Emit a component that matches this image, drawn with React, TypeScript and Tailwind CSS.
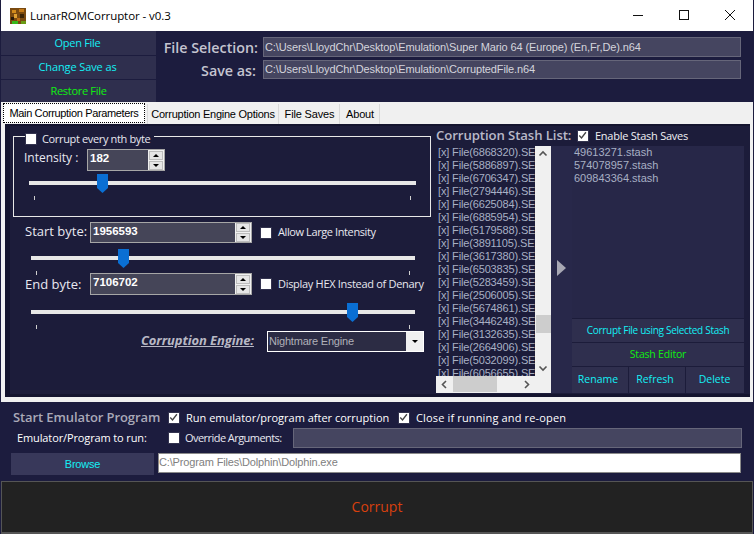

const FILES = ['6868320','5886897','6706347','2794446','6625084','6885954','5179588','3891105','3617380','6503835','5283459','2506005','5674861','3446248','3132635','2664906','5032099','6056655'];

function Check({ on = false, cls = '' }: { on?: boolean; cls?: string }) {
  return (
    <span className={`relative block h-[12px] w-[12px] shrink-0 bg-white border border-[#33334f] ${cls}`}>
      {on && (
        <svg viewBox="0 0 12 12" className="absolute left-0 top-0 h-[10px] w-[10px]">
          <path d="M1.5 5.5 L4.2 8.3 L9.5 1.5" fill="none" stroke="#444" strokeWidth="1.6" />
        </svg>
      )}
    </span>
  );
}

function Spin({ value, cls }: { value: string; cls: string }) {
  return (
    <div className={`flex border border-[#a6a6a6] bg-[#454558] ${cls}`}>
      <div className="flex-1 pl-[2px] text-[11.5px] leading-[16px] font-bold text-white font-['Liberation_Sans']">{value}</div>
      <div className="flex w-[16px] flex-col justify-center gap-[1px] bg-[#f0f0f0] px-[1px]">
        <div className="flex h-[9px] items-center justify-center border border-[#bdbdbd] bg-[#e6e6e6]">
          <div className="h-0 w-0 border-x-[3px] border-b-[3px] border-x-transparent border-b-black" />
        </div>
        <div className="flex h-[9px] items-center justify-center border border-[#bdbdbd] bg-[#e6e6e6]">
          <div className="h-0 w-0 border-x-[3px] border-t-[3px] border-x-transparent border-t-black" />
        </div>
      </div>
    </div>
  );
}

function Thumb({ left }: { left: string }) {
  return (
    <svg viewBox="0 0 11 19" className={`absolute top-[-7px] h-[19px] w-[11px] ${left}`}>
      <path d="M0 0H11V14L5.5 19L0 14Z" fill="#0a6fd4" />
    </svg>
  );
}

function Slider({ cls, thumb }: { cls: string; thumb: string }) {
  return (
    <div className={`relative h-[25px] ${cls}`}>
      <div className="h-[4px] bg-[#e7e7e7]" />
      <Thumb left={thumb} />
      <div className="mt-[11px] flex justify-between px-[5px]">
        <div className="h-[4px] w-[1px] bg-[#cfcfcf]" />
        <div className="h-[4px] w-[1px] bg-[#cfcfcf]" />
      </div>
    </div>
  );
}

function Btn({ label, cls }: { label: string; cls: string }) {
  return <div className={`flex items-center justify-center whitespace-nowrap bg-[#2f2f4e] ${cls}`}>{label}</div>;
}

export default function App() {
  return (
    <div className="flex h-[534px] w-[754px] flex-col overflow-hidden bg-[#1c1c3e] pl-[1px] pr-[1px] font-['Open_Sans',sans-serif] text-white">
      {/* Title bar */}
      <div className="flex h-[31px] shrink-0 items-center bg-white pl-[9px] text-black">
        <svg viewBox="0 0 16 16" className="h-[16px] w-[16px] shrink-0">
          <rect width="16" height="16" fill="#7a4a10" />
          <rect x="2" y="2" width="4" height="3" fill="#d08a1c" />
          <rect x="9" y="1" width="5" height="3" fill="#c47a18" />
          <rect x="4" y="6" width="3" height="4" fill="#e0a030" />
          <rect x="10" y="6" width="4" height="4" fill="#3a2408" />
          <rect x="1" y="9" width="3" height="3" fill="#2a1a08" />
          <rect x="7" y="10" width="3" height="3" fill="#b86c14" />
          <rect x="2" y="13" width="6" height="3" fill="#38b81c" />
          <rect x="11" y="13" width="5" height="3" fill="#6a9a14" />
        </svg>
        <span className="ml-[4px] text-[11.5px] tracking-[-0.08px] font-['Open_Sans']">LunarROMCorruptor - v0.3</span>
        <div className="ml-auto flex items-center">
          <svg viewBox="0 0 46 31" className="h-[31px] w-[46px]"><path d="M18 15.5H28" stroke="#111" strokeWidth="1" /></svg>
          <svg viewBox="0 0 46 31" className="h-[31px] w-[46px]"><rect x="18.5" y="10.5" width="9" height="9" fill="none" stroke="#111" /></svg>
          <svg viewBox="0 0 46 31" className="h-[31px] w-[46px]"><path d="M18 10L28 20M28 10L18 20" stroke="#111" strokeWidth="1" /></svg>
        </div>
      </div>

      {/* File header */}
      <div className="flex h-[71px] shrink-0">
        <div className="flex w-[155px] flex-col gap-[1px] text-[11px]">
          <Btn label="Open File" cls="h-[24px] pt-[1px] pr-[2px] tracking-[-0.3px] text-[#14f0f5]" />
          <Btn label="Change Save as" cls="h-[23px] pr-[2px] tracking-[-0.1px] text-[#14f0f5]" />
          <Btn label="Restore File" cls="h-[22px] tracking-[-0.3px] text-[#10f010]" />
        </div>
        <div className="flex flex-1 flex-col gap-[3px] pt-[6px]">
          <div className="flex h-[20px] items-center">
            <span className="w-[102px] whitespace-nowrap pt-[2px] text-right text-[14.3px] font-semibold text-[#c4c4d0]">File Selection:</span>
            <div className="ml-[5px] flex h-[20px] w-[478px] items-center whitespace-nowrap border border-[#66667a] bg-[#454560] pl-[1px] text-[11px] tracking-[-0.12px] text-[#d4d4dc] font-['Liberation_Sans']">C:\Users\LloydChr\Desktop\Emulation\Super Mario 64 (Europe) (En,Fr,De).n64</div>
          </div>
          <div className="flex h-[19px] items-center">
            <span className="w-[100px] pt-[2px] text-right text-[14.3px] font-semibold text-[#c4c4d0]">Save as:</span>
            <div className="ml-[7px] flex h-[19px] w-[478px] items-center whitespace-nowrap border border-[#66667a] bg-[#454560] pl-[1px] text-[11px] tracking-[-0.12px] text-[#d4d4dc] font-['Liberation_Sans']">C:\Users\LloydChr\Desktop\Emulation\CorruptedFile.n64</div>
          </div>
        </div>
      </div>

      {/* Tabs */}
      <div className="flex h-[22px] shrink-0 items-start whitespace-nowrap bg-[#f0f0f0] pl-[2px] pt-[1px] text-[11px] leading-[18px] text-black font-['Liberation_Sans']">
        <div className="h-[20px] w-[142px] border border-dotted border-black bg-white text-center tracking-[-0.35px]">Main Corruption Parameters</div>
        <div className="mt-[1px] ml-[2px] h-[21px] w-[132px] border-x border-[#d9d9d9] text-center leading-[21px] tracking-[-0.25px]">Corruption Engine Options</div>
        <div className="mt-[1px] h-[21px] w-[61px] border-r border-[#d9d9d9] pl-[1px] text-center leading-[21px] tracking-[-0.15px]">File Saves</div>
        <div className="mt-[1px] h-[21px] w-[40px] border-r border-[#d9d9d9] pl-[1px] text-center leading-[21px] tracking-[-0.15px]">About</div>
      </div>

      {/* Panel */}
      <div className="h-[278px] shrink-0 border-x-[2px] border-b-[5px] border-[#f0f0f0] bg-[#f0f0f0] pl-[2px] pr-[1px]">
        <div className="flex h-full border-t border-[#14142e] bg-[#14142e] p-[1px_0_4px_5px]">
          <div className="flex h-[268px] flex-1 bg-[#1c1c3a] pr-[1px]">
            {/* Parameters */}
            <div className="w-[426px] shrink-0 pl-[3px] pt-[10px]">
              <div className="relative h-[81px] w-[418px] border border-[#e8e8e8]">
                <div className="absolute left-[11px] top-[-5px] flex items-center gap-[5px] bg-[#1c1c3a] pr-[4px]">
                  <Check />
                  <span className="whitespace-nowrap text-[11px] leading-[14px] tracking-[-0.35px] text-[#e8e8f0]">Corrupt every nth byte</span>
                </div>
                <div className="flex items-center pl-[10px] pt-[12px]">
                  <span className="w-[63px] pb-[5px] text-[12px] leading-[17px] text-[#e8e8f0]">Intensity :</span>
                  <Spin value="182" cls="h-[22px] w-[78px]" />
                </div>
                <Slider cls="ml-[15px] mr-[14px] mt-[10px]" thumb="left-[68px]" />
              </div>
              <div className="mt-[5px] flex h-[21px] items-center pl-[12px]">
                <span className="w-[65px] pb-[1px] text-[13px] text-[#e8e8f0]">Start byte:</span>
                <Spin value="1956593" cls="h-[21px] w-[162px]" />
                <Check cls="ml-[8px]" />
                <span className="ml-[6px] whitespace-nowrap text-[11px] tracking-[-0.4px] text-[#e8e8f0]">Allow Large Intensity</span>
              </div>
              <Slider cls="ml-[18px] mt-[13px] w-[384px]" thumb="left-[87px]" />
              <div className="mt-[-8px] flex h-[22px] items-center pl-[12px]">
                <span className="w-[65px] pt-[2px] text-[13px] text-[#e8e8f0]">End byte:</span>
                <Spin value="7106702" cls="h-[22px] w-[162px]" />
                <Check cls="ml-[8px]" />
                <span className="ml-[6px] whitespace-nowrap pt-[1px] text-[11px] tracking-[-0.3px] text-[#e8e8f0]">Display HEX Instead of Denary</span>
              </div>
              <Slider cls="ml-[18px] mt-[15px] w-[384px]" thumb="left-[316px]" />
              <div className="mt-[-5px] flex h-[22px] items-center">
                <span className="ml-[128px] w-[116px] whitespace-nowrap text-[13px] font-bold italic tracking-[-0.1px] text-[#b8b8c4] underline">Corruption Engine:</span>
                <div className="ml-[10px] flex h-[21px] w-[157px] border border-white bg-[#2c2c44]">
                  <span className="flex-1 pl-[1px] text-[11px] leading-[19px] tracking-[-0.2px] text-[#b0b0b8] font-['Liberation_Sans']">Nightmare Engine</span>
                  <div className="flex w-[17px] items-center justify-center bg-[#f0f0f0]">
                    <div className="h-0 w-0 border-x-[3px] border-t-[3px] border-x-transparent border-t-black" />
                  </div>
                </div>
              </div>
            </div>

            {/* Stash */}
            <div className="flex flex-1 flex-col">
              <div className="flex h-[20px] items-center">
                <span className="w-[135px] whitespace-nowrap text-[13.2px] font-semibold tracking-[-0.1px] text-[#b8b8c8]">Corruption Stash List:</span>
                <Check on cls="ml-[6px]" />
                <span className="ml-[6px] whitespace-nowrap text-[11px] tracking-[-0.25px] text-[#f0f0f4]">Enable Stash Saves</span>
              </div>
              <div className="flex h-[247px]">
                <div className="flex h-full w-[115px] shrink-0 flex-col">
                  <div className="flex h-[230px]">
                    <div className="w-[99px] overflow-hidden pl-[2px] text-[11px] leading-[13px] tracking-[-0.15px] whitespace-nowrap text-[#a8b0c4] font-['Liberation_Sans']">
                      {FILES.map((f) => (
                        <div key={f}>[x] File({f}).SET</div>
                      ))}
                    </div>
                    <div className="relative w-[16px] bg-[#f0f0f0]">
                      <svg viewBox="0 0 16 16" className="absolute left-0 top-0 h-[16px] w-[16px]"><path d="M4.5 9.5L8 6L11.5 9.5" fill="none" stroke="#555" strokeWidth="1.6" /></svg>
                      <div className="absolute left-[1px] top-[169px] h-[18px] w-[15px] bg-[#cdcdcd]" />
                      <svg viewBox="0 0 16 16" className="absolute bottom-0 left-0 h-[16px] w-[16px]"><path d="M4.5 6.5L8 10L11.5 6.5" fill="none" stroke="#555" strokeWidth="1.6" /></svg>
                    </div>
                  </div>
                  <div className="relative h-[17px] bg-[#f0f0f0]">
                    <svg viewBox="0 0 17 17" className="absolute left-0 top-0 h-[17px] w-[17px]"><path d="M10 5L6.5 8.5L10 12" fill="none" stroke="#555" strokeWidth="1.6" /></svg>
                    <div className="absolute left-[17px] top-0 h-[16px] w-[44px] bg-[#cdcdcd]" />
                    <svg viewBox="0 0 17 17" className="absolute left-[82px] top-0 h-[17px] w-[17px]"><path d="M7 5L10.5 8.5L7 12" fill="none" stroke="#555" strokeWidth="1.6" /></svg>
                  </div>
                </div>
                <div className="flex w-[21px] shrink-0 items-center justify-center bg-[#28284a] pb-[4px]">
                  <svg viewBox="0 0 9 16" className="h-[16px] w-[9px]"><path d="M0 0L9 8L0 16Z" fill="#a8a8b4" /></svg>
                </div>
                <div className="flex w-[172px] shrink-0 flex-col gap-[1px]">
                  <div className="h-[172px] bg-[#272748] pl-[2px] text-[11px] leading-[13px] text-[#a8b0c4] font-['Liberation_Sans']">
                    <div>49613271.stash</div>
                    <div>574078957.stash</div>
                    <div>609843364.stash</div>
                  </div>
                  <Btn label="Corrupt File using Selected Stash" cls="h-[23px] text-[10px] tracking-[-0.3px] text-[#14f0f5]" />
                  <Btn label="Stash Editor" cls="h-[23px] text-[10.5px] tracking-[-0.2px] text-[#10f010]" />
                  <div className="flex h-[26px] gap-[1px] text-[10.5px]">
                    <Btn label="Rename" cls="w-[56px] pr-[4px] text-[#14f0f5]" />
                    <Btn label="Refresh" cls="w-[56px] pr-[4px] text-[#14f0f5]" />
                    <Btn label="Delete" cls="w-[58px] pr-[1px] text-[#14f0f5]" />
                  </div>
                </div>
              </div>
            </div>
          </div>
        </div>
      </div>

      {/* Emulator */}
      <div className="flex h-[79px] shrink-0 flex-col pt-[8px]">
        <div className="flex h-[16px] items-center">
          <span className="ml-[12px] w-[155px] whitespace-nowrap text-[13px] font-semibold tracking-[-0.1px] text-[#a9a9b8]">Start Emulator Program</span>
          <Check on />
          <span className="ml-[6px] w-[212px] whitespace-nowrap text-[11px]">Run emulator/program after corruption</span>
          <Check on />
          <span className="ml-[6px] whitespace-nowrap text-[11px] tracking-[0.15px]">Close if running and re-open</span>
        </div>
        <div className="mt-[2px] flex h-[20px] items-center">
          <span className="ml-[16px] w-[151px] whitespace-nowrap text-[11px] tracking-[-0.12px]">Emulator/Program to run:</span>
          <Check />
          <span className="ml-[5px] w-[108px] whitespace-nowrap text-[11px] tracking-[-0.55px] text-[#e8e8f0]">Override Arguments:</span>
          <div className="h-[20px] w-[449px] border border-[#66667a] bg-[#454560]" />
        </div>
        <div className="mt-[5px] flex h-[22px] items-start">
          <div className="ml-[10px] flex h-[22px] w-[143px] items-center justify-center bg-[#38385a] text-[11px] tracking-[-0.2px] text-[#14f0f5] font-['Liberation_Sans']">Browse</div>
          <div className="ml-[4px] h-[20px] w-[583px] border border-[#8a8a8a] bg-white text-[11px] leading-[17px] tracking-[-0.15px] text-[#808080] font-['Liberation_Sans']">C:\Program Files\Dolphin\Dolphin.exe</div>
        </div>
      </div>

      {/* Corrupt */}
      <div className="flex h-[52px] shrink-0 items-center justify-center border border-[#555] bg-[#222222] pb-[1px] text-[14px] text-[#d8400e]">Corrupt</div>
      <div className="flex-1 bg-[#555]" />
    </div>
  );
}
